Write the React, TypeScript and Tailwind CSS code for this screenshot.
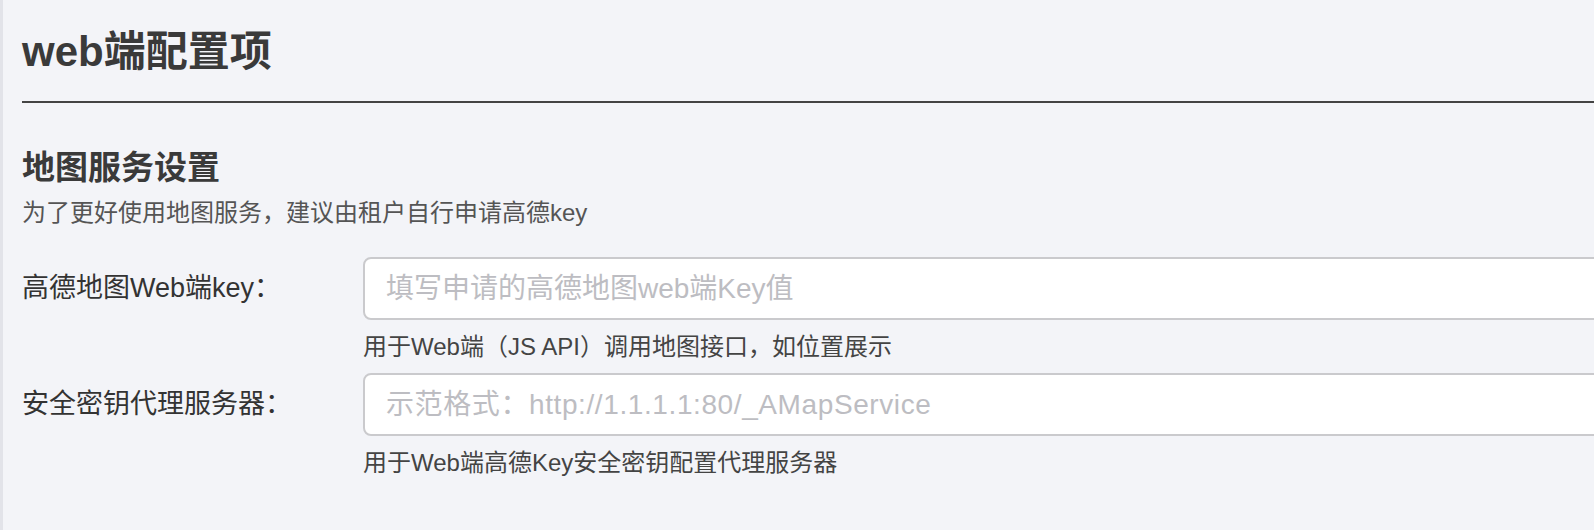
import React from "react";

const font = { fontFamily: '"Liberation Sans", "Noto Sans CJK SC", sans-serif' };

function Row({ label, placeholder, help, wide }: { label: string; placeholder: string; help: string; wide?: boolean }) {
  return (
    <div>
      <div className="flex items-center">
        <div className="w-[341px] shrink-0 text-[27px] text-[#333333]">{label}</div>
        <input
          className={
            "h-[63px] flex-1 -mr-[30px] rounded-[8px] border-2 border-[#cacacd] bg-white px-[21px] text-[28px] text-[#333] outline-none placeholder:text-[#bdbdc2] " +
            (wide ? "tracking-[0.6px]" : "")
          }
          placeholder={placeholder}
        />
      </div>
      <div className="ml-[341px] mt-[12px] text-[24px] leading-[30px] text-[#444444]">{help}</div>
    </div>
  );
}

export default function App() {
  return (
    <div className="h-[530px] w-full overflow-hidden bg-[#f3f4f8] border-l-[3px] border-[#e2e3e9]" style={font}>
      <div className="pl-[19px] pt-[28px]">
        <h1 className="text-[42px] font-bold leading-[48px] text-[#3a3a3a]">web端配置项</h1>
        <div className="mt-[25px] h-[2px] bg-[#444444]" />
        <h2 className="mt-[45px] text-[33px] font-bold leading-[40px] text-[#3a3a3a]">地图服务设置</h2>
        <p className="mt-[10px] text-[24px] leading-[30px] text-[#555555]">为了更好使用地图服务，建议由租户自行申请高德key</p>
        <div className="mt-[29px]">
          <Row label="高德地图Web端key：" placeholder="填写申请的高德地图web端Key值" help="用于Web端（JS API）调用地图接口，如位置展示" />
        </div>
        <div className="mt-[11px]">
          <Row wide label="安全密钥代理服务器：" placeholder="示范格式：http://1.1.1.1:80/_AMapService" help="用于Web端高德Key安全密钥配置代理服务器" />
        </div>
      </div>
    </div>
  );
}
